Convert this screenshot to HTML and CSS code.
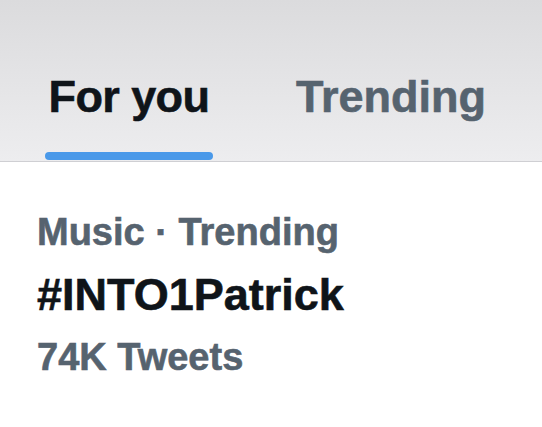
FILE: index.html
```html
<!DOCTYPE html>
<html lang="en">
<head>
  <meta charset="UTF-8">
  <meta name="viewport" content="width=device-width, initial-scale=1.0">
  <title>Explore</title>
  <link rel="stylesheet" href="styles.css">
</head>
<body>
  <div class="tabs">
    <div class="tab active">
      <span class="tab-label">For you</span>
      <span class="tab-indicator"></span>
    </div>
    <div class="tab">
      <span class="tab-label">Trending</span>
    </div>
  </div>

  <div class="trend">
    <p class="trend-meta">Music · Trending</p>
    <p class="trend-name">#INTO1Patrick</p>
    <p class="trend-meta">74K Tweets</p>
  </div>
</body>
</html>
```

FILE: styles.css
```css
body {
  margin: 0;
  padding: 0;
  font-family: "Liberation Sans", Arial, sans-serif;
  font-weight: bold;
  background-color: #ffffff;
  -webkit-text-stroke: 0.6px currentColor;
}
.tabs {
  display: flex;
  padding: 74px 0 0 45px;
  height: 87px;
  background: linear-gradient(to bottom, #dbdbdd, #ededef);
  border-bottom: 1px solid #cfcfd3;
}
.tab {
  display: flex;
  flex-direction: column;
  align-items: center;
}
.tab.active {
  width: 168px;
}
.tab + .tab {
  margin-left: 83px;
  align-items: flex-start;
}
.tab-label {
  font-size: 45px;
  line-height: 45px;
  color: #56636f;
  white-space: nowrap;
}
.tab.active .tab-label {
  color: #0f1419;
  letter-spacing: -0.6px;
}
.tab-indicator {
  display: block;
  width: 168px;
  height: 8px;
  margin-top: 33px;
  border-radius: 4px;
  background-color: #4a99e9;
}
.trend {
  display: flex;
  flex-direction: column;
  gap: 21px;
  padding: 51px 0 0 37px;
}
.trend p {
  margin: 0;
  white-space: nowrap;
}
.trend-meta {
  font-size: 38px;
  line-height: 38px;
  color: #56636f;
}
.trend-name {
  font-size: 45px;
  line-height: 45px;
  color: #0f1419;
}
```
